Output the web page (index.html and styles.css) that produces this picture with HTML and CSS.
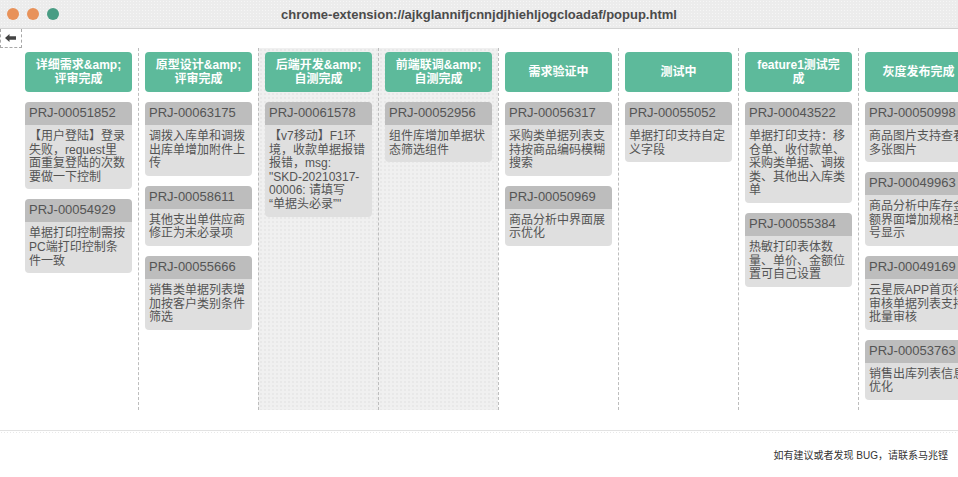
FILE: index.html
```html
<!DOCTYPE html>
<html>

<head>
    <meta charset="utf-8" />
    <title>popup</title>
    <link rel="stylesheet" href="styles.css">
</head>

<body>
    <div class="window">
        <div class="titlebar">
            <div class="lights">
                <span class="light close"></span>
                <span class="light minimize"></span>
                <span class="light zoom"></span>
            </div>
            <div class="title">chrome-extension://ajkglannifjcnnjdjhiehljogcloadaf/popup.html</div>
            <div></div>
        </div>
        <div class="popup">
            <div class="toolbar">
                <div class="back">
                    <svg viewBox="0 0 11 8" width="11" height="8">
                        <polygon points="0,4 4.5,0 4.5,2.2 11,2.2 11,5.8 4.5,5.8 4.5,8" />
                    </svg>
                </div>
            </div>
            <div class="board">
                <div class="column">
                    <div class="stage">详细需求&amp;amp;评审完成</div>
                    <div class="card">
                        <div class="card-id">PRJ-00051852</div>
                        <div class="card-text">【用户登陆】登录失败，request里面重复登陆的次数要做一下控制</div>
                    </div>
                    <div class="card">
                        <div class="card-id">PRJ-00054929</div>
                        <div class="card-text">单据打印控制需按PC端打印控制条件一致</div>
                    </div>
                </div>
                <div class="column">
                    <div class="stage">原型设计&amp;amp;评审完成</div>
                    <div class="card">
                        <div class="card-id">PRJ-00063175</div>
                        <div class="card-text">调拨入库单和调拨出库单增加附件上传</div>
                    </div>
                    <div class="card">
                        <div class="card-id">PRJ-00058611</div>
                        <div class="card-text">其他支出单供应商修正为未必录项</div>
                    </div>
                    <div class="card">
                        <div class="card-id">PRJ-00055666</div>
                        <div class="card-text">销售类单据列表增加按客户类别条件筛选</div>
                    </div>
                </div>
                <div class="column shaded">
                    <div class="stage">后端开发&amp;amp;自测完成</div>
                    <div class="card">
                        <div class="card-id">PRJ-00061578</div>
                        <div class="card-text">【v7移动】F1环境，收款单据报错报错，msg:<br>"SKD-20210317-<br>00006: 请填写<br>“单据头必录”"</div>
                    </div>
                </div>
                <div class="column shaded">
                    <div class="stage">前端联调&amp;amp;自测完成</div>
                    <div class="card">
                        <div class="card-id">PRJ-00052956</div>
                        <div class="card-text">组件库增加单据状态筛选组件</div>
                    </div>
                </div>
                <div class="column">
                    <div class="stage">需求验证中</div>
                    <div class="card">
                        <div class="card-id">PRJ-00056317</div>
                        <div class="card-text">采购类单据列表支持按商品编码模糊搜索</div>
                    </div>
                    <div class="card">
                        <div class="card-id">PRJ-00050969</div>
                        <div class="card-text">商品分析中界面展示优化</div>
                    </div>
                </div>
                <div class="column">
                    <div class="stage">测试中</div>
                    <div class="card">
                        <div class="card-id">PRJ-00055052</div>
                        <div class="card-text">单据打印支持自定义字段</div>
                    </div>
                </div>
                <div class="column">
                    <div class="stage">feature1测试完成</div>
                    <div class="card">
                        <div class="card-id">PRJ-00043522</div>
                        <div class="card-text">单据打印支持：移仓单、收付款单、采购类单据、调拨类、其他出入库类单</div>
                    </div>
                    <div class="card">
                        <div class="card-id">PRJ-00055384</div>
                        <div class="card-text">热敏打印表体数量、单价、金额位置可自己设置</div>
                    </div>
                </div>
                <div class="column">
                    <div class="stage">灰度发布完成</div>
                    <div class="card">
                        <div class="card-id">PRJ-00050998</div>
                        <div class="card-text">商品图片支持查看多张图片</div>
                    </div>
                    <div class="card">
                        <div class="card-id">PRJ-00049963</div>
                        <div class="card-text">商品分析中库存金额界面增加规格型号显示</div>
                    </div>
                    <div class="card">
                        <div class="card-id">PRJ-00049169</div>
                        <div class="card-text">云星辰APP首页待审核单据列表支持批量审核</div>
                    </div>
                    <div class="card">
                        <div class="card-id">PRJ-00053763</div>
                        <div class="card-text">销售出库列表信息优化</div>
                    </div>
                </div>
            </div>
            <div class="footer">
                <div class="footer-text">如有建议或者发现 BUG，请联系马兆铿</div>
            </div>
        </div>
    </div>
</body>

</html>
```

FILE: styles.css
```css
:root {
    --stage-color: #5dba9b;
    --card-head: #bdbdbd;
    --card-body: #dfdfdf;
    --card-text: #545454;
    --divider: #bdbdbd;
    --shade: #f0f0f0;
}

* {
    margin: 0;
    padding: 0;
    box-sizing: border-box;
}

html,
body {
    height: 100%;
}

body {
    font-family: "Liberation Sans", "Noto Sans CJK SC", sans-serif;
    background-color: #ffffff;
    overflow: hidden;
}

.window {
    height: 100%;
    display: flex;
    flex-direction: column;
}

.titlebar {
    height: 29px;
    flex: none;
    display: grid;
    grid-template-columns: 1fr auto 1fr;
    align-items: center;
    background-color: #ececec;
    background-image: radial-gradient(#f6f6f6 0.7px, transparent 0.9px);
    background-size: 3px 3px;
    border-bottom: 1px solid #d2d2d2;
}

.lights {
    display: flex;
    gap: 8px;
    padding-left: 7px;
}

.light {
    width: 12px;
    height: 12px;
    border-radius: 50%;
    background-color: #e8925a;
}

.light.zoom {
    background-color: #5bb59a;
    background-image: radial-gradient(#3f8f78 0.6px, transparent 0.9px);
    background-size: 2px 2px;
}

.title {
    font-size: 13px;
    font-weight: bold;
    color: #4b4b4b;
    white-space: nowrap;
}

.popup {
    flex: 1;
    display: flex;
    flex-direction: column;
}

.toolbar {
    height: 19px;
    flex: none;
}

.back {
    width: 22px;
    height: 19px;
    border: 1px dashed #a8a8a8;
    border-top: none;
    display: flex;
    align-items: center;
    justify-content: center;
    padding-right: 1px;
}

.back svg {
    fill: #444444;
}

.board {
    height: 362px;
    flex: none;
    display: flex;
    padding-left: 18px;
    overflow: hidden;
}

.column {
    width: 120px;
    flex: none;
    padding: 4px 6px 0;
    border-left: 1px dashed var(--divider);
}

.column:first-child {
    border-left-color: transparent;
}

.column.shaded {
    background-color: var(--shade);
    background-image: radial-gradient(#e3e3e3 0.6px, transparent 0.9px);
    background-size: 4px 4px;
}

.stage {
    height: 40px;
    padding: 0 8px;
    border-radius: 4px;
    background-color: var(--stage-color);
    color: #ffffff;
    font-size: 12px;
    font-weight: bold;
    line-height: 14px;
    text-align: center;
    display: flex;
    align-items: center;
    justify-content: center;
    margin-bottom: 10px;
}

.card {
    margin-bottom: 10px;
    border-radius: 4px;
    overflow: hidden;
    color: var(--card-text);
}

.card-id {
    background-color: var(--card-head);
    font-size: 13px;
    line-height: 16px;
    padding: 3px 4px 4px;
    white-space: nowrap;
}

.card-text {
    background-color: var(--card-body);
    font-size: 12px;
    line-height: 13.6px;
    padding: 5px 4px;
}

.footer {
    flex: 1;
    margin-top: 20px;
    border-top: 1px solid #e2e2e2;
    display: flex;
    flex-direction: column;
}

.footer::before {
    content: "";
    height: 4px;
    background-image: radial-gradient(#e9e9e9 0.7px, transparent 0.9px);
    background-size: 3px 3px;
}

.footer-text {
    flex: 1;
    display: flex;
    align-items: center;
    justify-content: flex-end;
    padding: 0 10px 4px 0;
    font-size: 10px;
    color: #333333;
}
```
